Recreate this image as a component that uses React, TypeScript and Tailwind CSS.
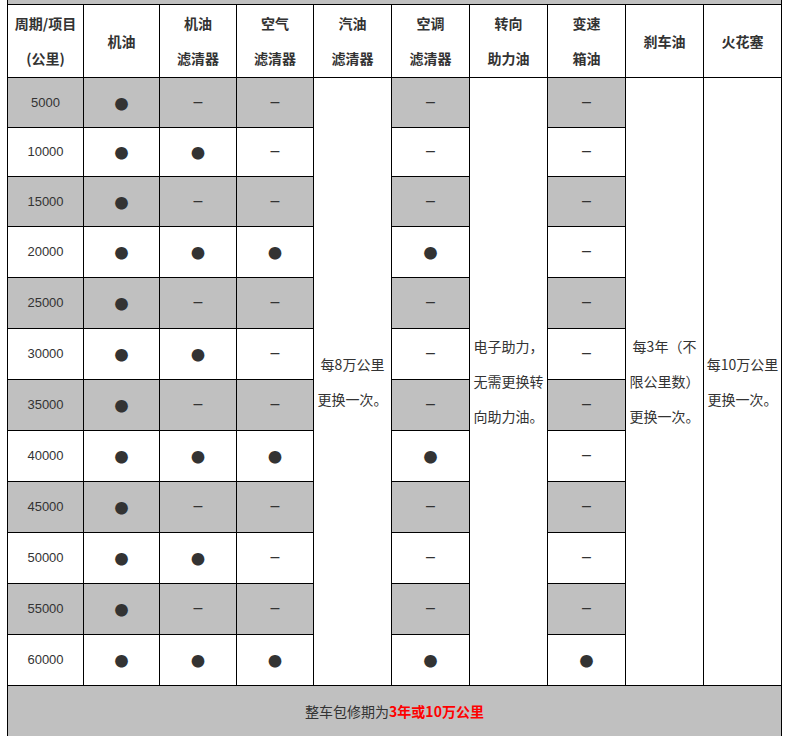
import React from "react";

type Mark = 0 | 1;
const rows: [string, Mark, Mark, Mark, Mark, Mark][] = [
  ["5000", 1, 0, 0, 0, 0],
  ["10000", 1, 1, 0, 0, 0],
  ["15000", 1, 0, 0, 0, 0],
  ["20000", 1, 1, 1, 1, 0],
  ["25000", 1, 0, 0, 0, 0],
  ["30000", 1, 1, 0, 0, 0],
  ["35000", 1, 0, 0, 0, 0],
  ["40000", 1, 1, 1, 1, 0],
  ["45000", 1, 0, 0, 0, 0],
  ["50000", 1, 1, 0, 0, 0],
  ["55000", 1, 0, 0, 0, 0],
  ["60000", 1, 1, 1, 1, 1],
];

const headers: string[][] = [
  ["周期/项目", "(公里)"],
  ["机油"],
  ["机油", "滤清器"],
  ["空气", "滤清器"],
  ["汽油", "滤清器"],
  ["空调", "滤清器"],
  ["转向", "助力油"],
  ["变速", "箱油"],
  ["刹车油"],
  ["火花塞"],
];

function MarkCell({ v, gray }: { v: Mark; gray: boolean }) {
  return (
    <div
      className={`flex items-center justify-center text-[#333] ${
        gray ? "bg-[#c0c0c0]" : "bg-white"
      }`}
    >
      {v ? (
        <span className="font-['Noto_Sans_CJK_SC',sans-serif] text-[14px] leading-none">●</span>
      ) : (
        <span className="font-['Liberation_Sans',sans-serif] text-[16px] leading-none -mt-[2px]">–</span>
      )}
    </div>
  );
}

function MergedCell({ col, lines }: { col: string; lines: string[] }) {
  return (
    <div
      className={`${col} row-start-3 row-span-12 bg-white flex items-center justify-center text-center text-[14px] leading-[35px] text-[#333] font-['Noto_Sans_CJK_SC',sans-serif]`}
    >
      <div>
        {lines.map((l, i) => (
          <div key={i} className="whitespace-nowrap">
            {l}
          </div>
        ))}
      </div>
    </div>
  );
}

export default function App() {
  return (
    <div className="w-[793px] h-[736px] overflow-hidden bg-white">
      <div className="ml-[7px] w-fit bg-black px-px pb-px gap-px grid grid-cols-[75px_75px_76px_76px_77px_77px_77px_77px_77px_77px] grid-rows-[4px_72px_49px_48px_49px_50px_50px_50px_50px_50px_50px_50px_50px_50px_50px]">
        <div className="col-span-10 bg-[#c0c0c0]" />
        {headers.map((h, i) => (
          <div
            key={i}
            className="bg-white flex flex-col items-center justify-center text-center text-[14px] leading-[35px] font-bold text-[#333] font-['Noto_Sans_CJK_SC',sans-serif]"
          >
            {h.map((l, j) => (
              <div key={j} className="whitespace-nowrap">
                {l}
              </div>
            ))}
          </div>
        ))}

        <MergedCell col="col-start-5" lines={["每8万公里", "更换一次。"]} />
        <MergedCell col="col-start-7" lines={["电子助力，", "无需更换转", "向助力油。"]} />
        <MergedCell col="col-start-9" lines={["每3年（不", "限公里数）", "更换一次。"]} />
        <MergedCell col="col-start-10" lines={["每10万公里", "更换一次。"]} />

        {rows.map((r, i) => {
          const gray = i % 2 === 0;
          return (
            <React.Fragment key={r[0]}>
              <div
                className={`flex items-center justify-center text-[13px] text-[#333] font-['Liberation_Sans',sans-serif] ${
                  gray ? "bg-[#c0c0c0]" : "bg-white"
                }`}
              >
                {r[0]}
              </div>
              <MarkCell v={r[1]} gray={gray} />
              <MarkCell v={r[2]} gray={gray} />
              <MarkCell v={r[3]} gray={gray} />
              <MarkCell v={r[4]} gray={gray} />
              <MarkCell v={r[5]} gray={gray} />
            </React.Fragment>
          );
        })}

        <div className="col-span-10 bg-[#c0c0c0] flex items-center justify-center text-[14px] text-[#333] font-['Noto_Sans_CJK_SC',sans-serif]">
          <span>整车包修期为</span>
          <span className="font-bold text-[#ff0000]">3年或10万公里</span>
        </div>
      </div>
    </div>
  );
}
